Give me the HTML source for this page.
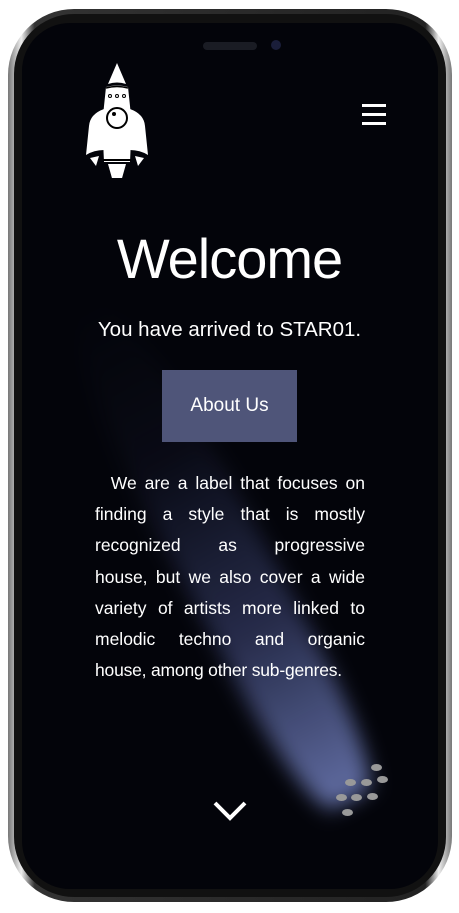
<!DOCTYPE html><html><head><style>
body{margin:0;width:459px;height:913px;background:#fff;overflow:hidden;position:relative;font-family:"Liberation Sans",sans-serif}
.ph{position:absolute;left:8px;top:9px;width:444px;height:893px;border-radius:66px;background:linear-gradient(90deg,#777,#eee 3%,#333 6%,#222 94%,#eee 97%,#777);}
.ph2{position:absolute;left:14px;top:14px;width:432px;height:883px;border-radius:60px;background:#111;}
.sc{position:absolute;left:22px;top:23px;width:416px;height:866px;border-radius:48px;background:#03040a;overflow:hidden}
.beam{position:absolute;left:283px;top:217px;width:90px;height:560px;transform:rotate(-28deg);transform-origin:bottom center;background:linear-gradient(0deg,rgba(120,135,200,.8),rgba(80,90,150,.45) 35%,rgba(40,45,80,.15) 70%,rgba(40,45,80,0));filter:blur(10px);border-radius:45% 45% 30% 30%}
.t{position:absolute;color:#fff;text-align:center;width:459px;left:0}
.btn{position:absolute;left:162px;top:370px;width:135px;height:72px;background:#4f5579;color:#fff;font-size:19px;line-height:72px;text-align:center}
.p{position:absolute;left:95px;top:468px;width:270px;color:#fff;font-size:17.5px;line-height:31.2px}
.p div{text-align:justify;text-align-last:justify;white-space:nowrap}
.p div.l{text-align-last:left;letter-spacing:-0.2px}
.d{position:absolute;width:11px;height:7px;border-radius:50%;background:#999}
</style></head><body>
<div class="ph"></div><div class="ph2"></div>
<div class="sc"><div class="beam"></div></div>
<div style="position:absolute;left:203px;top:42px;width:54px;height:8px;border-radius:4px;background:#1a1c24"></div>
<div style="position:absolute;left:271px;top:40px;width:10px;height:10px;border-radius:50%;background:#1a1e3a"></div>
<svg style="position:absolute;left:86px;top:62px" width="64" height="116" viewBox="0 0 64 116">
<path d="M31 1 L22 22 Q31 19 40 22 Z" fill="#fff"/>
<path d="M20 25 Q31 22 42 25 L44 44 Q46 60 44 100 L18 100 Q16 60 18 44 Z" fill="#fff"/>
<path d="M18 47 Q4 52 3 64 L0 93 Q8 88 18 88 Z M44 47 Q58 52 59 64 L62 93 Q54 88 44 88 Z" fill="#fff"/>
<path d="M4 96 L10 104 L13 94 Z M58 96 L52 104 L49 94 Z M22 102 L31 134 L40 102 Z" fill="#fff"/>
<circle cx="31" cy="56" r="10" fill="none" stroke="#000" stroke-width="2"/><circle cx="28" cy="52" r="2" fill="#000"/>
<path d="M20 26 Q31 23 42 26" fill="none" stroke="#000" stroke-width="1.5"/>
<circle cx="24" cy="34" r="1.5" fill="none" stroke="#000"/><circle cx="31" cy="34" r="1.5" fill="none" stroke="#000"/><circle cx="38" cy="34" r="1.5" fill="none" stroke="#000"/>
<line x1="17" y1="98" x2="45" y2="98" stroke="#000" stroke-width="2"/>
</svg>
<div style="position:absolute;left:362px;top:104px;width:24px;height:3px;background:#fff;box-shadow:0 9px 0 #fff,0 18px 0 #fff"></div>
<div class="t" style="top:226px;font-size:56px;letter-spacing:-1px">Welcome</div>
<div class="t" style="top:318px;font-size:20.5px">You have arrived to STAR01.</div>
<div class="btn">About Us</div>
<div class="p">
<div>&nbsp; We are a label that focuses on</div>
<div>finding a style that is mostly</div>
<div>recognized as progressive</div>
<div>house, but we also cover a wide</div>
<div>variety of artists more linked to</div>
<div>melodic techno and organic</div>
<div class="l">house, among other sub-genres.</div>
</div>
<svg style="position:absolute;left:212px;top:800px" width="36" height="22"><path d="M3 3 L18 18 L33 3" fill="none" stroke="#fff" stroke-width="4"/></svg>
<div class="d" style="left:371px;top:764px"></div><div class="d" style="left:345px;top:779px"></div><div class="d" style="left:361px;top:779px"></div><div class="d" style="left:377px;top:776px"></div>
<div class="d" style="left:336px;top:794px"></div><div class="d" style="left:351px;top:794px"></div><div class="d" style="left:367px;top:793px"></div><div class="d" style="left:342px;top:809px"></div>
</body></html>
